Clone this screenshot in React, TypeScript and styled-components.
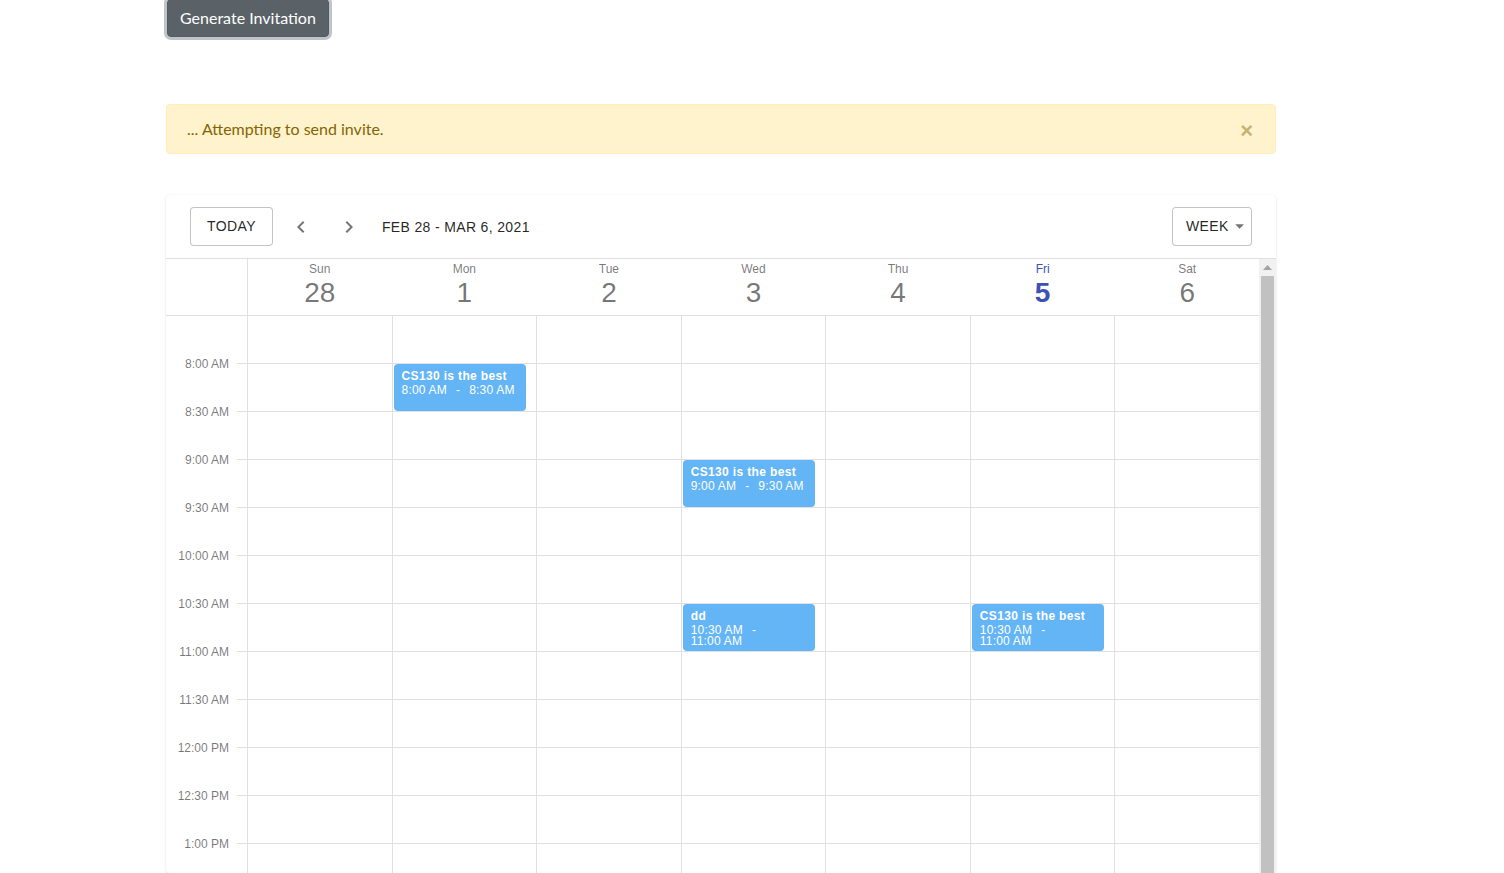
import * as React from "react";
import styled, { createGlobalStyle, css } from "styled-components";

const GlobalStyle = createGlobalStyle`
  html, body {
    margin: 0;
    overflow: hidden;
    background: #fff;
  }
  * {
    box-sizing: border-box;
  }
`;

// labels sit on the bottom line of each half-hour row; the last row runs off the page
const rows = [
  "8:00 AM",
  "8:30 AM",
  "9:00 AM",
  "9:30 AM",
  "10:00 AM",
  "10:30 AM",
  "11:00 AM",
  "11:30 AM",
  "12:00 PM",
  "12:30 PM",
  "1:00 PM",
  "",
];

const days = [
  { name: "Sun", num: 28 },
  { name: "Mon", num: 1 },
  { name: "Tue", num: 2 },
  { name: "Wed", num: 3 },
  { name: "Thu", num: 4 },
  { name: "Fri", num: 5, today: true },
  { name: "Sat", num: 6 },
];

const events = [
  { day: 1, row: 1, title: "CS130 is the best", start: "8:00 AM", end: "8:30 AM" },
  { day: 3, row: 3, title: "CS130 is the best", start: "9:00 AM", end: "9:30 AM" },
  { day: 3, row: 6, title: "dd", start: "10:30 AM", end: "11:00 AM" },
  { day: 5, row: 6, title: "CS130 is the best", start: "10:30 AM", end: "11:00 AM" },
];

const ChevronLeft = () => (
  <svg width="24" height="24" viewBox="0 0 24 24" fill="currentColor">
    <path d="M15.41 7.41L14 6l-6 6 6 6 1.41-1.41L10.83 12z" />
  </svg>
);

const ChevronRight = () => (
  <svg width="24" height="24" viewBox="0 0 24 24" fill="currentColor">
    <path d="M10 6L8.59 7.41 13.17 12l-4.58 4.59L10 18l6-6z" />
  </svg>
);

const ArrowDropDown = () => (
  <svg width="24" height="24" viewBox="0 0 24 24" fill="currentColor">
    <path d="M7 10l5 5 5-5z" />
  </svg>
);

const ArrowUp = () => (
  <svg width="9" height="5" viewBox="0 0 9 5" fill="#a3a3a3">
    <path d="M4.5 0L9 5H0z" />
  </svg>
);

const App = () => {
  return (
    <Page>
      <GlobalStyle />
      <GenerateButton>Generate Invitation</GenerateButton>

      <Alert>
        <span>... Attempting to send invite.</span>
        <CloseButton aria-label="Close">&times;</CloseButton>
      </Alert>

      <Paper>
        <Toolbar>
          <OutlinedButton>TODAY</OutlinedButton>
          <IconButton>
            <ChevronLeft />
          </IconButton>
          <IconButton>
            <ChevronRight />
          </IconButton>
          <DateRange>FEB 28 - MAR 6, 2021</DateRange>
          <ViewSelect>
            <span>WEEK</span>
            <ArrowDropDown />
          </ViewSelect>
        </Toolbar>

        <Scroller>
          <GridArea>
            <HeaderRow>
              <Corner />
              {days.map((d, i) => (
                <DayHeader key={d.name} $first={i === 0}>
                  <DayName $today={d.today}>{d.name}</DayName>
                  <DayNum $today={d.today}>{d.num}</DayNum>
                </DayHeader>
              ))}
            </HeaderRow>

            <Body>
              {rows.map((label, r) => (
                <React.Fragment key={r}>
                  <TimeCell>
                    {label && <TimeLabel>{label}</TimeLabel>}
                    <Tick />
                  </TimeCell>
                  {days.map((d, c) => (
                    <Cell key={d.name}>
                      {events
                        .filter((e) => e.day === c && e.row === r)
                        .map((e) => (
                          <Appointment key={e.title + e.start}>
                            <AppTitle>{e.title}</AppTitle>
                            <AppTime>
                              <TimePart>{e.start}</TimePart>
                              <Dash>-</Dash>
                              <TimePart>{e.end}</TimePart>
                            </AppTime>
                          </Appointment>
                        ))}
                    </Cell>
                  ))}
                </React.Fragment>
              ))}
            </Body>
          </GridArea>

          <ScrollTrack>
            <ScrollArrow>
              <ArrowUp />
            </ScrollArrow>
            <ScrollThumb />
          </ScrollTrack>
        </Scroller>
      </Paper>
    </Page>
  );
};

const Page = styled.div`
  width: 1110px;
  margin-left: 166px;
  display: flex;
  flex-direction: column;
  align-items: flex-start;
`;

const GenerateButton = styled.button`
  margin: -1px 0 0 1px;
  padding: 6px 12px;
  font-family: Lato, "Open Sans", sans-serif;
  font-size: 16px;
  line-height: 24px;
  color: #fff;
  background: #5a6268;
  border: 1px solid #545b62;
  border-radius: 4px;
  box-shadow: 0 0 0 3px rgba(130, 138, 145, 0.5);
  cursor: pointer;
`;

const Alert = styled.div`
  align-self: stretch;
  height: 50px;
  margin-top: 67px;
  display: flex;
  align-items: center;
  justify-content: space-between;
  padding: 0 20px;
  font-family: Lato, "Open Sans", sans-serif;
  font-size: 16px;
  line-height: 24px;
  color: #856404;
  background: #fff3cd;
  border: 1px solid #ffeeba;
  border-radius: 4px;
`;

const CloseButton = styled.button`
  height: 20px;
  padding: 0;
  margin: 4px 2px 0 0;
  background: none;
  border: 0;
  font-family: "Liberation Sans", Arial, sans-serif;
  font-size: 22px;
  font-weight: 700;
  line-height: 20px;
  color: #856404;
  opacity: 0.45;
  cursor: pointer;
`;

const Paper = styled.div`
  align-self: stretch;
  margin-top: 41px;
  background: #fff;
  border-radius: 4px;
  box-shadow: 0 1px 3px rgba(0, 0, 0, 0.1), 0 0 1px rgba(0, 0, 0, 0.08);
  font-family: "Liberation Sans", Arial, sans-serif;
`;

const Toolbar = styled.div`
  height: 64px;
  display: flex;
  align-items: center;
  padding: 0 24px;
  border-bottom: 1px solid #e0e0e0;
`;

const outlined = css`
  height: 39px;
  display: flex;
  align-items: center;
  background: #fff;
  border: 1px solid rgba(0, 0, 0, 0.23);
  border-radius: 4px;
  font-family: "Liberation Sans", Arial, sans-serif;
  font-size: 14px;
  letter-spacing: 0.4px;
  color: rgba(0, 0, 0, 0.87);
  cursor: pointer;
`;

const OutlinedButton = styled.button`
  ${outlined};
  margin-top: -1px;
  padding: 0 16px;
`;

const IconButton = styled.button`
  width: 48px;
  height: 48px;
  display: flex;
  align-items: center;
  justify-content: center;
  margin-left: 4px;
  padding: 0;
  background: none;
  border: 0;
  border-radius: 50%;
  color: rgba(0, 0, 0, 0.54);
  cursor: pointer;

  & + & {
    margin-left: 0;
  }
`;

const DateRange = styled.div`
  margin-left: 9px;
  font-size: 14px;
  letter-spacing: 0.35px;
  color: rgba(0, 0, 0, 0.87);
`;

const ViewSelect = styled.div`
  ${outlined};
  margin-left: auto;
  margin-top: -1px;
  width: 80px;
  padding: 0 0 0 13px;
  justify-content: space-between;

  svg {
    color: rgba(0, 0, 0, 0.54);
    margin-right: 1px;
  }
`;

const Scroller = styled.div`
  height: 614px;
  display: flex;
  overflow: hidden;
`;

const GridArea = styled.div`
  flex: 1;
  min-width: 0;
`;

const ScrollTrack = styled.div`
  width: 17px;
  display: flex;
  flex-direction: column;
  background: #f1f1f1;
`;

const ScrollArrow = styled.div`
  height: 17px;
  display: flex;
  align-items: center;
  justify-content: center;
  padding-bottom: 1px;
`;

const ScrollThumb = styled.div`
  flex: 1;
  margin: 0 2px;
  background: #c1c1c1;
`;

const grid = css`
  display: grid;
  grid-template-columns: 81px repeat(7, 1fr);
`;

const HeaderRow = styled.div`
  ${grid};
  height: 57px;
  background: #fff;
  border-bottom: 1px solid #e0e0e0;
`;

const Corner = styled.div``;

const DayHeader = styled.div<{ $first?: boolean }>`
  display: flex;
  flex-direction: column;
  align-items: center;
  border-left: 1px solid ${(p) => (p.$first ? "#e0e0e0" : "transparent")};
`;

const DayName = styled.div<{ $today?: boolean }>`
  margin-top: 3px;
  font-size: 12px;
  line-height: 14px;
  color: ${(p) => (p.$today ? "#3f51b5" : "rgba(0, 0, 0, 0.54)")};
`;

const DayNum = styled.div<{ $today?: boolean }>`
  margin-top: 1px;
  font-size: 28px;
  line-height: 32px;
  font-weight: ${(p) => (p.$today ? 700 : 400)};
  color: ${(p) => (p.$today ? "#3f51b5" : "rgba(0, 0, 0, 0.54)")};
`;

const Body = styled.div`
  ${grid};
  grid-auto-rows: 48px;
`;

const TimeCell = styled.div`
  display: flex;
  justify-content: flex-end;
  align-items: flex-end;
`;

const TimeLabel = styled.div`
  margin: 0 8px -7px 0;
  font-size: 12px;
  line-height: 14px;
  color: rgba(0, 0, 0, 0.54);
  white-space: nowrap;
`;

const Tick = styled.div`
  width: 10px;
  height: 1px;
  background: #e0e0e0;
`;

const Cell = styled.div`
  position: relative;
  border-left: 1px solid #e0e0e0;
  border-bottom: 1px solid #e0e0e0;
`;

const Appointment = styled.div`
  position: absolute;
  top: 0;
  left: 1px;
  right: 10px;
  height: 47px;
  z-index: 1;
  padding: 5px 8px 4px;
  overflow: hidden;
  background: #64b5f6;
  border-radius: 4px;
  color: #fff;
  font-size: 12px;
`;

const AppTitle = styled.div`
  font-weight: 700;
  line-height: 14px;
  letter-spacing: 0.35px;
  white-space: nowrap;
  overflow: hidden;
  text-overflow: ellipsis;
`;

const AppTime = styled.div`
  margin-top: 2px;
  line-height: 11px;
  letter-spacing: 0.2px;
`;

const TimePart = styled.span`
  display: inline-block;
  white-space: nowrap;
`;

const Dash = styled.span`
  display: inline-block;
  padding: 0 9px;
`;

export default App;
